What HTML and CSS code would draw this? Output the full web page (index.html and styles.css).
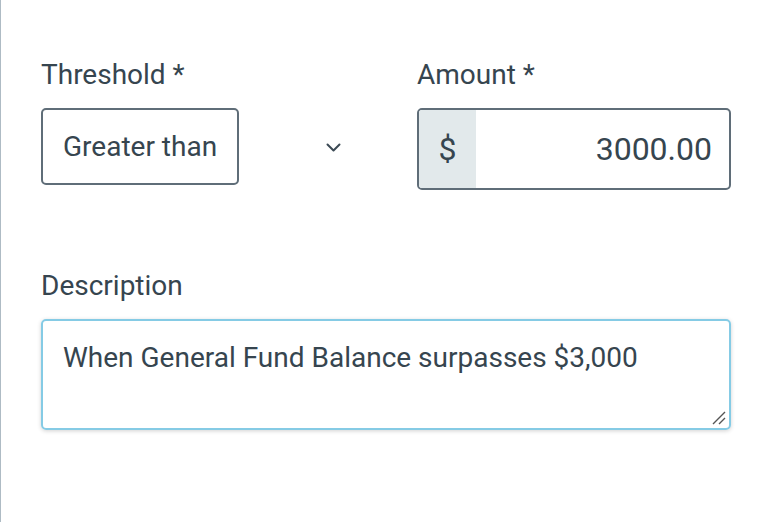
FILE: index.html
```html
<!DOCTYPE html>
<html>
<head>
<meta charset="utf-8">
<link rel="stylesheet" href="styles.css">
</head>
<body>
<div class="panel">
  <div class="row">
    <div class="field threshold">
      <label class="label">Threshold *</label>
      <div class="select-wrap">
        <div class="select">Greater than</div>
        <svg class="chevron" width="15" height="10" viewBox="0 0 15 10"><path d="M1.5 1.5 L7.5 7.5 L13.5 1.5" fill="none" stroke="#3c4a55" stroke-width="2" stroke-linecap="round" stroke-linejoin="round"/></svg>
      </div>
    </div>
    <div class="field amount">
      <label class="label">Amount *</label>
      <div class="money">
        <span class="prefix">$</span>
        <span class="value">3000.00</span>
      </div>
    </div>
  </div>
  <div class="field desc">
    <label class="label">Description</label>
    <div class="textarea">
      When General Fund Balance surpasses $3,000
      <svg class="grip" width="14" height="14" viewBox="0 0 14 14"><path d="M1 13 L13 1 M7 13 L13 7" stroke="#555" stroke-width="1.4"/></svg>
    </div>
  </div>
</div>
</body>
</html>
```
FILE: styles.css
```css
html, body {
  margin: 0;
  padding: 0;
  background: #fff;
}
body {
  font-family: Roboto, "Liberation Sans", sans-serif;
  color: #36454f;
}
.panel {
  border-left: 1px solid #aebbc4;
  height: 522px;
  box-sizing: border-box;
  padding: 57px 39px 0 40px;
}
.row {
  display: flex;
}
.field {
  display: flex;
  flex-direction: column;
}
.label {
  font-size: 28px;
  line-height: 36px;
  margin-bottom: 15px;
}
.threshold {
  width: 376px;
}
.select-wrap {
  display: flex;
  align-items: center;
}
.select {
  width: 198px;
  height: 77px;
  box-sizing: border-box;
  border: 2px solid #5f6d78;
  border-radius: 5px;
  font-size: 28px;
  padding-left: 20px;
  display: flex;
  align-items: center;
}
.chevron {
  margin-left: 87px;
  margin-top: 2px;
}
.amount {
  width: 314px;
}
.money {
  display: flex;
  height: 82px;
  box-sizing: border-box;
  border: 2px solid #5f6d78;
  border-radius: 5px;
  overflow: hidden;
  font-size: 32px;
}
.prefix {
  width: 57px;
  background: #e2e9eb;
  display: flex;
  align-items: center;
  justify-content: center;
}
.value {
  flex: 1;
  display: flex;
  align-items: center;
  justify-content: flex-end;
  padding-right: 17px;
}
.desc {
  margin-top: 78px;
}
.textarea {
  position: relative;
  height: 111px;
  box-sizing: border-box;
  border: 2px solid #85cbe5;
  border-radius: 5px;
  box-shadow: 0 1px 4px rgba(0,0,0,0.18);
  font-size: 28px;
  padding: 22px 20px 0;
  line-height: 30px;
}
.grip {
  position: absolute;
  right: 3px;
  bottom: 3px;
}
```
